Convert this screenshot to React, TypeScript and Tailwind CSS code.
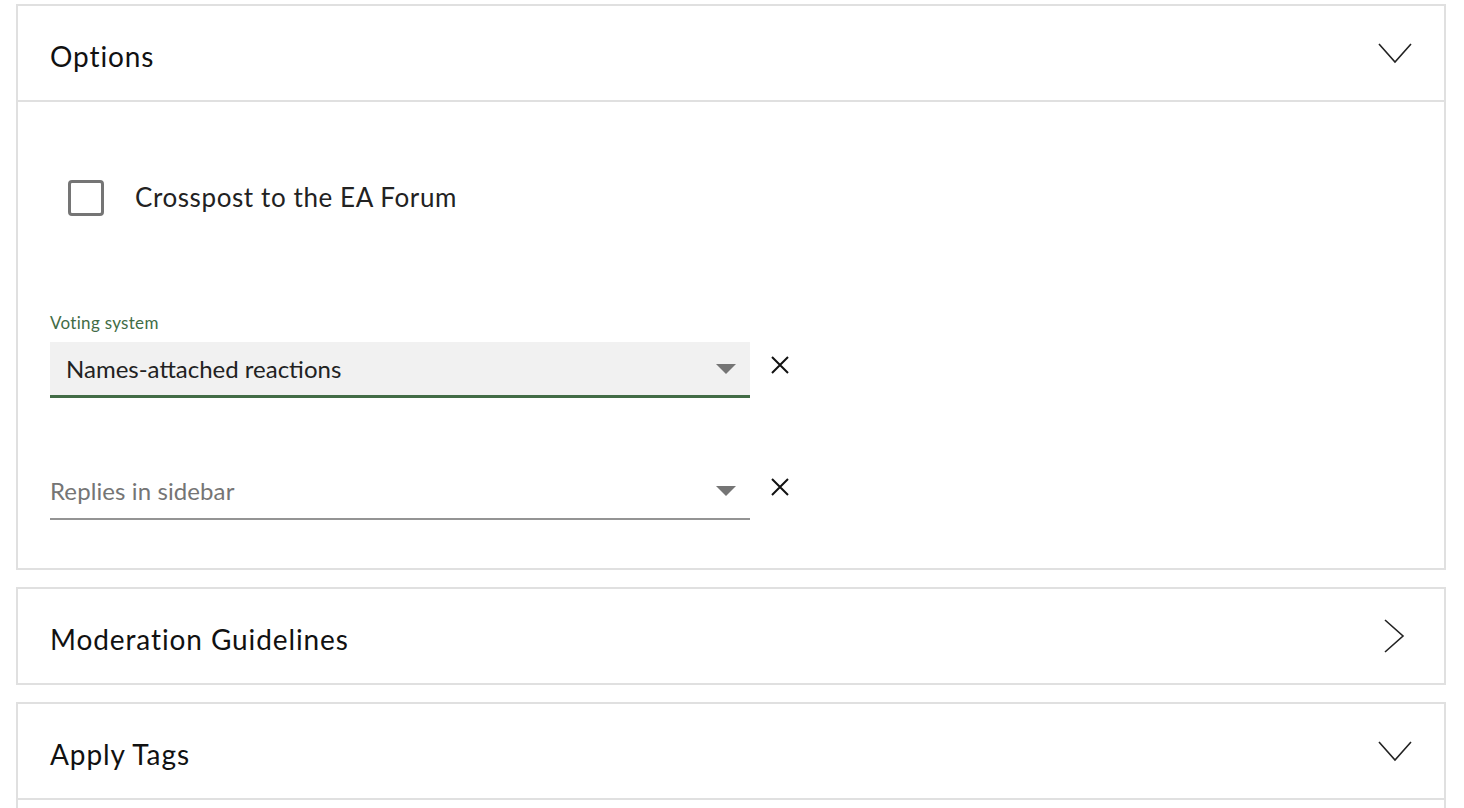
import React from "react";

const font = { fontFamily: "'Lato', 'Open Sans', sans-serif" };

function ChevronDown() {
  return (
    <svg width="34" height="21" viewBox="0 0 34 21" className="block">
      <path d="M1 1 L17 19 L33 1" fill="none" stroke="#222" strokeWidth="1.6" />
    </svg>
  );
}

function ChevronRight() {
  return (
    <svg width="21" height="34" viewBox="0 0 21 34" className="block">
      <path d="M1 1 L19 17 L1 33" fill="none" stroke="#222" strokeWidth="1.6" />
    </svg>
  );
}

function Cross() {
  return (
    <svg width="20" height="20" viewBox="0 0 20 20" className="block">
      <path d="M2 2 L18 18 M18 2 L2 18" fill="none" stroke="#111" strokeWidth="2" />
    </svg>
  );
}

function Triangle() {
  return (
    <svg width="20" height="10" viewBox="0 0 20 10" className="block">
      <path d="M0 0 L20 0 L10 10 Z" fill="#757575" />
    </svg>
  );
}

function Header({ title, open }: { title: string; open: boolean }) {
  return (
    <div className="flex h-[94px] items-center justify-between pl-[32px] pr-[32px]">
      <div className="pt-[5px] text-[28px] text-[#111] tracking-[0.9px]">{title}</div>
      {open ? (
        <div className="mr-[0px]">
          <ChevronDown />
        </div>
      ) : (
        <div className="mr-[7px]">
          <ChevronRight />
        </div>
      )}
    </div>
  );
}

export default function App() {
  return (
    <div className="min-h-[808px] overflow-hidden bg-white px-[16px] pt-[4px]" style={font}>
      <div className="w-[1430px] border-2 border-[#e0e0e0]">
        <div className="border-b-2 border-[#e0e0e0]">
          <Header title="Options" open />
        </div>
        <div className="pl-[32px] pt-[76px] pb-[48px]">
          <div className="flex items-center">
            <div className="ml-[18px] h-[36px] w-[36px] rounded-[4px] border-[3px] border-[#757575]" />
            <div className="ml-[31px] text-[26px] text-[#222] tracking-[0.6px]">Crosspost to the EA Forum</div>
          </div>
          <div className="mt-[96px] text-[17px] leading-[20px] text-[#426c46] tracking-[0.3px]">Voting system</div>
          <div className="mt-[9px] flex items-center">
            <div className="flex h-[56px] w-[700px] items-center justify-between border-b-[3px] border-[#426c46] bg-[#f1f1f1] pl-[16px] pr-[14px]">
              <span className="text-[24px] text-[#222] tracking-[0px]">Names-attached reactions</span>
              <Triangle />
            </div>
            <div className="ml-[20px] -mt-[10px]">
              <Cross />
            </div>
          </div>
          <div className="mt-[66px] flex items-center">
            <div className="flex h-[56px] w-[700px] items-center justify-between border-b-2 border-[#949494] pr-[14px]">
              <span className="text-[24px] text-[#757575] tracking-[0.1px]">Replies in sidebar</span>
              <Triangle />
            </div>
            <div className="ml-[20px] -mt-[10px]">
              <Cross />
            </div>
          </div>
        </div>
      </div>
      <div className="mt-[17px] w-[1430px] border-2 border-[#e0e0e0]">
        <Header title="Moderation Guidelines" open={false} />
      </div>
      <div className="mt-[17px] w-[1430px] border-2 border-[#e0e0e0]">
        <div className="border-b-2 border-[#e0e0e0]">
          <Header title="Apply Tags" open />
        </div>
        <div className="h-[40px]" />
      </div>
    </div>
  );
}
